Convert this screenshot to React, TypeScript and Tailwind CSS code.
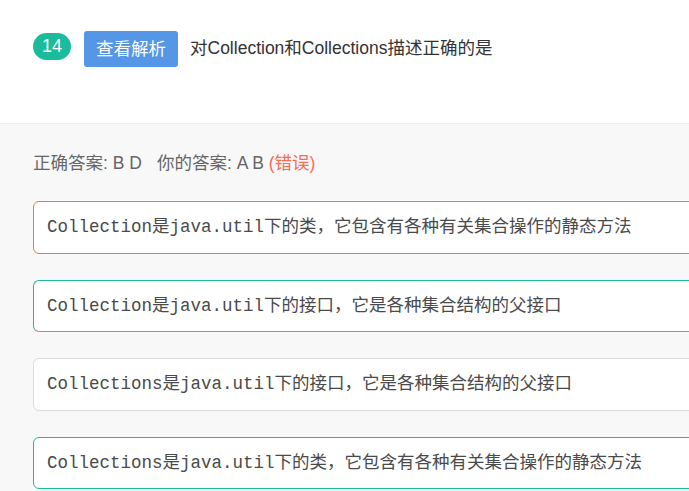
const sans = "font-['Liberation_Sans','Noto_Sans_CJK_SC',sans-serif]";
const mono = "font-['Liberation_Mono','Noto_Sans_CJK_SC',monospace]";

const options = [
  {
    text: "Collection是java.util下的类，它包含有各种有关集合操作的静态方法",
    border: "border-[#f96c57]",
  },
  {
    text: "Collection是java.util下的接口，它是各种集合结构的父接口",
    border: "border-t-[#1abc9c] border-l-[#1abc9c] border-r-[#f96c57] border-b-[#f96c57]",
  },
  {
    text: "Collections是java.util下的接口，它是各种集合结构的父接口",
    border: "border-[#dcdcdc]",
  },
  {
    text: "Collections是java.util下的类，它包含有各种有关集合操作的静态方法",
    border: "border-[#1abc9c]",
  },
];

export default function App() {
  return (
    <div className={`h-[491px] w-[689px] overflow-hidden bg-[#f8f8f8] ${sans}`}>
      <div className="flex h-[124px] items-start border-b border-[#ececec] bg-white px-[33px] pt-[31px]">
        <span className="mt-[2px] flex h-[27px] w-[38px] items-center justify-center rounded-full bg-[#1abc9c] text-[18px] font-medium text-white">
          14
        </span>
        <button className="ml-[13px] flex h-[36px] w-[94px] items-center justify-center rounded-[3px] bg-[#5596e6] text-[17.5px] text-white">
          查看解析
        </button>
        <p className="ml-[12px] mt-[-1px] text-[17.5px] leading-[36px] text-[#333]">
          对Collection和Collections描述正确的是
        </p>
      </div>
      <div className="pl-[33px] pt-[27px]">
        <p className="text-[17.5px] leading-[24px] text-[#666]">
          正确答案: B D<span className="ml-[15px]">你的答案: A B </span>
          <span className="text-[#f96c57]">(错误)</span>
        </p>
        <div className="mt-[26px] flex w-[720px] flex-col gap-[26px]">
          {options.map((o) => (
            <div
              key={o.text}
              className={`flex h-[52.5px] items-center rounded-[6px] border bg-white pl-[13px] ${o.border}`}
            >
              <span className={`${mono} text-[17.5px] text-[#4a4a4a]`}>{o.text}</span>
            </div>
          ))}
        </div>
      </div>
    </div>
  );
}
